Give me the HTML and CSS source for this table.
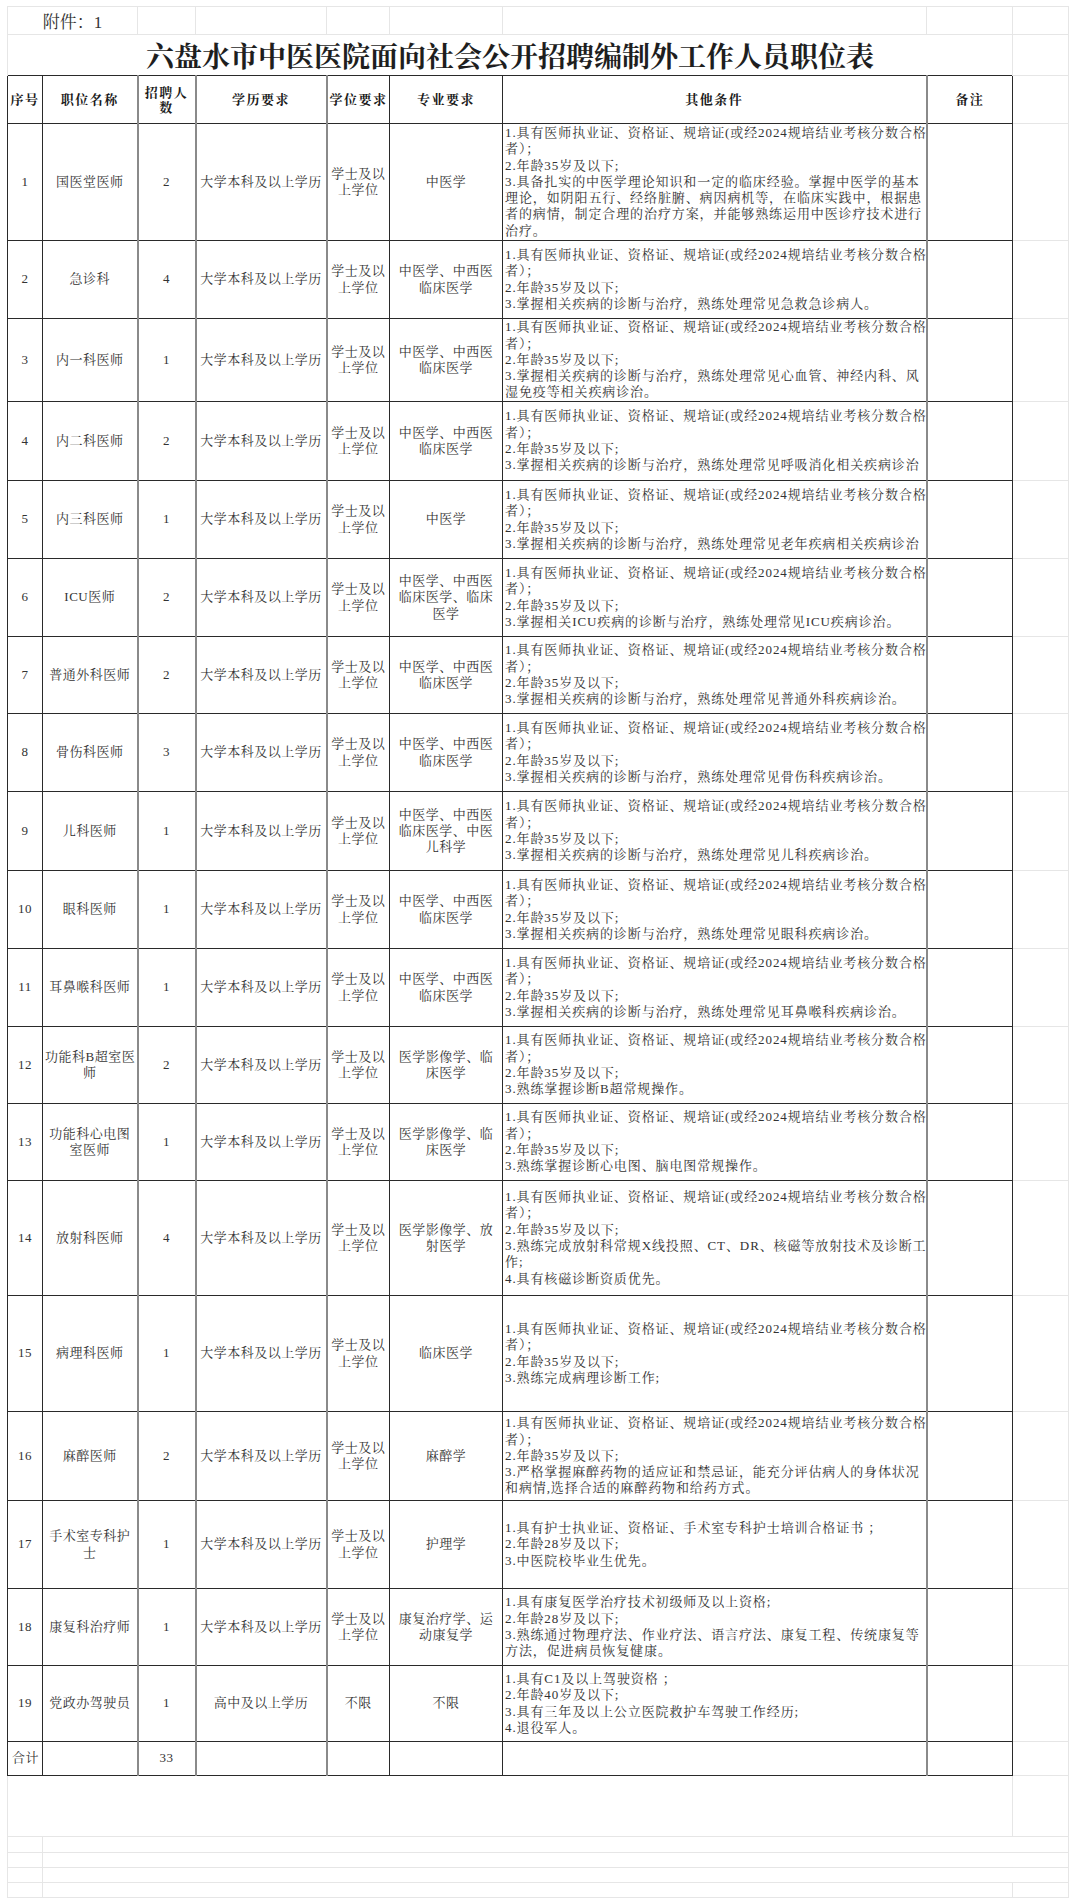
FILE: index.html
```html
<!DOCTYPE html>
<html lang="zh-CN">
<head>
<meta charset="utf-8">
<title>六盘水市中医医院面向社会公开招聘编制外工作人员职位表</title>
<link rel="stylesheet" href="styles.css">
</head>
<body>
<div class="sheet">
<table class="grid">
<colgroup>
<col class="c-no"><col class="c-name"><col class="c-num"><col class="c-edu"><col class="c-deg"><col class="c-major"><col class="c-cond"><col class="c-note"><col class="c-extra">
</colgroup>
<tbody>
<tr class="h28">
<td colspan="2" class="f attach">附件：1</td><td class="f"></td><td class="f"></td><td class="f"></td><td class="f"></td><td class="f"></td><td class="f"></td><td class="f fe"></td>
</tr>
<tr class="h39">
<td colspan="8" class="f title">六盘水市中医医院面向社会公开招聘编制外工作人员职位表</td><td class="f fe"></td>
</tr>
<tr class="row head h48">
<th>序号</th><th>职位名称</th><th>招聘人<br>数</th><th>学历要求</th><th>学位要求</th><th>专业要求</th><th>其他条件</th><th>备注</th><td class="fx"></td>
</tr>
<tr class="row h117">
<td>1</td><td>国医堂医师</td><td>2</td><td>大学本科及以上学历</td><td>学士及以<br>上学位</td><td>中医学</td>
<td class="cond">1.具有医师执业证、资格证、规培证(或经2024规培结业考核分数合格<br>者）；<br>2.年龄35岁及以下;<br>3.具备扎实的中医学理论知识和一定的临床经验。掌握中医学的基本<br>理论，如阴阳五行、经络脏腑、病因病机等，在临床实践中，根据患<br>者的病情，制定合理的治疗方案，并能够熟练运用中医诊疗技术进行<br>治疗。</td><td></td><td class="fx"></td>
</tr>
<tr class="row h78">
<td>2</td><td>急诊科</td><td>4</td><td>大学本科及以上学历</td><td>学士及以<br>上学位</td><td>中医学、中西医<br>临床医学</td>
<td class="cond">1.具有医师执业证、资格证、规培证(或经2024规培结业考核分数合格<br>者）；<br>2.年龄35岁及以下;<br>3.掌握相关疾病的诊断与治疗，熟练处理常见急救急诊病人。</td><td></td><td class="fx"></td>
</tr>
<tr class="row h83">
<td>3</td><td>内一科医师</td><td>1</td><td>大学本科及以上学历</td><td>学士及以<br>上学位</td><td>中医学、中西医<br>临床医学</td>
<td class="cond">1.具有医师执业证、资格证、规培证(或经2024规培结业考核分数合格<br>者）；<br>2.年龄35岁及以下;<br>3.掌握相关疾病的诊断与治疗，熟练处理常见心血管、神经内科、风<br>湿免疫等相关疾病诊治。</td><td></td><td class="fx"></td>
</tr>
<tr class="row h79">
<td>4</td><td>内二科医师</td><td>2</td><td>大学本科及以上学历</td><td>学士及以<br>上学位</td><td>中医学、中西医<br>临床医学</td>
<td class="cond">1.具有医师执业证、资格证、规培证(或经2024规培结业考核分数合格<br>者）；<br>2.年龄35岁及以下;<br>3.掌握相关疾病的诊断与治疗，熟练处理常见呼吸消化相关疾病诊治</td><td></td><td class="fx"></td>
</tr>
<tr class="row h78">
<td>5</td><td>内三科医师</td><td>1</td><td>大学本科及以上学历</td><td>学士及以<br>上学位</td><td>中医学</td>
<td class="cond">1.具有医师执业证、资格证、规培证(或经2024规培结业考核分数合格<br>者）；<br>2.年龄35岁及以下;<br>3.掌握相关疾病的诊断与治疗，熟练处理常见老年疾病相关疾病诊治</td><td></td><td class="fx"></td>
</tr>
<tr class="row h78">
<td>6</td><td>ICU医师</td><td>2</td><td>大学本科及以上学历</td><td>学士及以<br>上学位</td><td>中医学、中西医<br>临床医学、临床<br>医学</td>
<td class="cond">1.具有医师执业证、资格证、规培证(或经2024规培结业考核分数合格<br>者）；<br>2.年龄35岁及以下;<br>3.掌握相关ICU疾病的诊断与治疗，熟练处理常见ICU疾病诊治。</td><td></td><td class="fx"></td>
</tr>
<tr class="row h77">
<td>7</td><td>普通外科医师</td><td>2</td><td>大学本科及以上学历</td><td>学士及以<br>上学位</td><td>中医学、中西医<br>临床医学</td>
<td class="cond">1.具有医师执业证、资格证、规培证(或经2024规培结业考核分数合格<br>者）；<br>2.年龄35岁及以下;<br>3.掌握相关疾病的诊断与治疗，熟练处理常见普通外科疾病诊治。</td><td></td><td class="fx"></td>
</tr>
<tr class="row h78">
<td>8</td><td>骨伤科医师</td><td>3</td><td>大学本科及以上学历</td><td>学士及以<br>上学位</td><td>中医学、中西医<br>临床医学</td>
<td class="cond">1.具有医师执业证、资格证、规培证(或经2024规培结业考核分数合格<br>者）；<br>2.年龄35岁及以下;<br>3.掌握相关疾病的诊断与治疗，熟练处理常见骨伤科疾病诊治。</td><td></td><td class="fx"></td>
</tr>
<tr class="row h79">
<td>9</td><td>儿科医师</td><td>1</td><td>大学本科及以上学历</td><td>学士及以<br>上学位</td><td>中医学、中西医<br>临床医学、中医<br>儿科学</td>
<td class="cond">1.具有医师执业证、资格证、规培证(或经2024规培结业考核分数合格<br>者）；<br>2.年龄35岁及以下;<br>3.掌握相关疾病的诊断与治疗，熟练处理常见儿科疾病诊治。</td><td></td><td class="fx"></td>
</tr>
<tr class="row h78">
<td>10</td><td>眼科医师</td><td>1</td><td>大学本科及以上学历</td><td>学士及以<br>上学位</td><td>中医学、中西医<br>临床医学</td>
<td class="cond">1.具有医师执业证、资格证、规培证(或经2024规培结业考核分数合格<br>者）；<br>2.年龄35岁及以下;<br>3.掌握相关疾病的诊断与治疗，熟练处理常见眼科疾病诊治。</td><td></td><td class="fx"></td>
</tr>
<tr class="row h78">
<td>11</td><td>耳鼻喉科医师</td><td>1</td><td>大学本科及以上学历</td><td>学士及以<br>上学位</td><td>中医学、中西医<br>临床医学</td>
<td class="cond">1.具有医师执业证、资格证、规培证(或经2024规培结业考核分数合格<br>者）；<br>2.年龄35岁及以下;<br>3.掌握相关疾病的诊断与治疗，熟练处理常见耳鼻喉科疾病诊治。</td><td></td><td class="fx"></td>
</tr>
<tr class="row h77">
<td>12</td><td>功能科B超室医<br>师</td><td>2</td><td>大学本科及以上学历</td><td>学士及以<br>上学位</td><td>医学影像学、临<br>床医学</td>
<td class="cond">1.具有医师执业证、资格证、规培证(或经2024规培结业考核分数合格<br>者）；<br>2.年龄35岁及以下;<br>3.熟练掌握诊断B超常规操作。</td><td></td><td class="fx"></td>
</tr>
<tr class="row h77">
<td>13</td><td>功能科心电图<br>室医师</td><td>1</td><td>大学本科及以上学历</td><td>学士及以<br>上学位</td><td>医学影像学、临<br>床医学</td>
<td class="cond">1.具有医师执业证、资格证、规培证(或经2024规培结业考核分数合格<br>者）；<br>2.年龄35岁及以下;<br>3.熟练掌握诊断心电图、脑电图常规操作。</td><td></td><td class="fx"></td>
</tr>
<tr class="row h115">
<td>14</td><td>放射科医师</td><td>4</td><td>大学本科及以上学历</td><td>学士及以<br>上学位</td><td>医学影像学、放<br>射医学</td>
<td class="cond">1.具有医师执业证、资格证、规培证(或经2024规培结业考核分数合格<br>者）；<br>2.年龄35岁及以下;<br>3.熟练完成放射科常规X线投照、CT、DR、核磁等放射技术及诊断工<br>作;<br>4.具有核磁诊断资质优先。</td><td></td><td class="fx"></td>
</tr>
<tr class="row h116">
<td>15</td><td>病理科医师</td><td>1</td><td>大学本科及以上学历</td><td>学士及以<br>上学位</td><td>临床医学</td>
<td class="cond">1.具有医师执业证、资格证、规培证(或经2024规培结业考核分数合格<br>者）；<br>2.年龄35岁及以下;<br>3.熟练完成病理诊断工作;</td><td></td><td class="fx"></td>
</tr>
<tr class="row h89">
<td>16</td><td>麻醉医师</td><td>2</td><td>大学本科及以上学历</td><td>学士及以<br>上学位</td><td>麻醉学</td>
<td class="cond">1.具有医师执业证、资格证、规培证(或经2024规培结业考核分数合格<br>者）；<br>2.年龄35岁及以下;<br>3.严格掌握麻醉药物的适应证和禁忌证，能充分评估病人的身体状况<br>和病情,选择合适的麻醉药物和给药方式。</td><td></td><td class="fx"></td>
</tr>
<tr class="row h88">
<td>17</td><td>手术室专科护<br>士</td><td>1</td><td>大学本科及以上学历</td><td>学士及以<br>上学位</td><td>护理学</td>
<td class="cond">1.具有护士执业证、资格证、手术室专科护士培训合格证书 ；<br>2.年龄28岁及以下;<br>3.中医院校毕业生优先。</td><td></td><td class="fx"></td>
</tr>
<tr class="row h77">
<td>18</td><td>康复科治疗师</td><td>1</td><td>大学本科及以上学历</td><td>学士及以<br>上学位</td><td>康复治疗学、运<br>动康复学</td>
<td class="cond">1.具有康复医学治疗技术初级师及以上资格;<br>2.年龄28岁及以下;<br>3.熟练通过物理疗法、作业疗法、语言疗法、康复工程、传统康复等<br>方法，促进病员恢复健康。</td><td></td><td class="fx"></td>
</tr>
<tr class="row h76">
<td>19</td><td>党政办驾驶员</td><td>1</td><td>高中及以上学历</td><td>不限</td><td>不限</td>
<td class="cond">1.具有C1及以上驾驶资格 ；<br>2.年龄40岁及以下;<br>3.具有三年及以上公立医院救护车驾驶工作经历;<br>4.退役军人。</td><td></td><td class="fx"></td>
</tr>
<tr class="row h34">
<td class="total">合计</td><td></td><td>33</td><td></td><td></td><td></td><td></td><td></td><td class="fx"></td>
</tr>
<tr class="h61">
<td colspan="8" class="f"></td><td class="f fe"></td>
</tr>
<tr class="h16">
<td class="f"></td><td colspan="8" class="f fe"></td>
</tr>
<tr class="h15">
<td class="f"></td><td colspan="8" class="f fe"></td>
</tr>
<tr class="h15">
<td class="f"></td><td colspan="8" class="f fe"></td>
</tr>
<tr class="h15 last">
<td class="f"></td><td colspan="7" class="f"></td><td class="f fe"></td>
</tr>
</tbody>
</table>
</div>
</body>
</html>
```

FILE: styles.css
```css
html, body {
  margin: 0;
  padding: 0;
  background: #ffffff;
}

body {
  font-family: "Liberation Serif", "Noto Serif CJK SC", "Noto Sans CJK SC", serif;
  color: #333333;
}

.sheet {
  padding: 6px 0 0 7px;
}

.grid {
  border-collapse: collapse;
  table-layout: fixed;
  width: 1062px;
}

.c-no { width: 35px; }
.c-name { width: 95px; }
.c-num { width: 58px; }
.c-edu { width: 131px; }
.c-deg { width: 63px; }
.c-major { width: 113px; }
.c-cond { width: 424px; }
.c-note { width: 86px; }
.c-extra { width: 56px; }

.grid td, .grid th {
  padding: 0 2px;
  vertical-align: middle;
  text-align: center;
  white-space: nowrap;
  overflow: hidden;
}

/* faint spreadsheet gridlines */
.f {
  border-top: 1px solid #e6e6e6;
  border-left: 1px solid #e6e6e6;
}
.fe {
  border-right: 1px solid #e6e6e6;
}
.last .f {
  border-bottom: 1px solid #e6e6e6;
}

/* the table proper */
.row > td, .row > th {
  border: 1px solid #2a2a2a;
  font-size: 13px;
  line-height: 16.3px;
  letter-spacing: 0.5px;
}
.row > :nth-child(3),
.row > :nth-child(4),
.row > :nth-child(5),
.row > :nth-child(8) {
  border-left: 2px solid #8a8a8a;
}
.row > .fx {
  border: none;
  border-top: 1px solid #e6e6e6;
  border-right: 1px solid #e6e6e6;
}

.head > th {
  font-weight: bold;
  color: #1a1a1a;
  letter-spacing: 1.5px;
  line-height: 15px;
}

.row > .cond {
  text-align: left;
  padding-left: 2px;
  letter-spacing: 0.9px;
}

.row > .total {
  text-align: left;
  padding-left: 4px;
}

.attach {
  font-size: 17px;
  color: #333;
}

.title {
  font-size: 28px;
  font-weight: bold;
  color: #1e1e1e;
  letter-spacing: 0;
}

/* spreadsheet row heights */
.h15 { height: 15px; }
.h16 { height: 16px; }
.h28 { height: 28px; }
.h34 { height: 34px; }
.h39 { height: 39px; }
.h48 { height: 48px; }
.h61 { height: 61px; }
.h76 { height: 76px; }
.h77 { height: 77px; }
.h78 { height: 78px; }
.h79 { height: 79px; }
.h83 { height: 83px; }
.h88 { height: 88px; }
.h89 { height: 89px; }
.h115 { height: 115px; }
.h116 { height: 116px; }
.h117 { height: 117px; }
```
